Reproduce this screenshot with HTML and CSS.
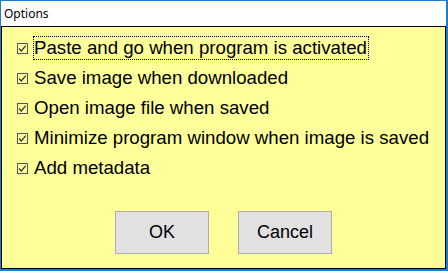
FILE: index.html
```html
<!DOCTYPE html>
<html>
<head>
<meta charset="utf-8">
<link rel="stylesheet" href="styles.css">
</head>
<body>
<div class="window">
  <div class="titlebar">Options</div>
  <div class="content">
    <div class="options">
      <div class="row"><svg class="cb" width="11" height="11" viewBox="0 0 11 11"><rect x="0.5" y="0.5" width="10" height="10" fill="none" stroke="#555"/><polyline points="2,5.5 4.3,8 8.8,2.6" fill="none" stroke="#333" stroke-width="1.2"/></svg><span class="label focus">Paste and go when program is activated</span></div>
      <div class="row"><svg class="cb" width="11" height="11" viewBox="0 0 11 11"><rect x="0.5" y="0.5" width="10" height="10" fill="none" stroke="#555"/><polyline points="2,5.5 4.3,8 8.8,2.6" fill="none" stroke="#333" stroke-width="1.2"/></svg><span class="label">Save image when downloaded</span></div>
      <div class="row"><svg class="cb" width="11" height="11" viewBox="0 0 11 11"><rect x="0.5" y="0.5" width="10" height="10" fill="none" stroke="#555"/><polyline points="2,5.5 4.3,8 8.8,2.6" fill="none" stroke="#333" stroke-width="1.2"/></svg><span class="label">Open image file when saved</span></div>
      <div class="row"><svg class="cb" width="11" height="11" viewBox="0 0 11 11"><rect x="0.5" y="0.5" width="10" height="10" fill="none" stroke="#555"/><polyline points="2,5.5 4.3,8 8.8,2.6" fill="none" stroke="#333" stroke-width="1.2"/></svg><span class="label">Minimize program window when image is saved</span></div>
      <div class="row"><svg class="cb" width="11" height="11" viewBox="0 0 11 11"><rect x="0.5" y="0.5" width="10" height="10" fill="none" stroke="#555"/><polyline points="2,5.5 4.3,8 8.8,2.6" fill="none" stroke="#333" stroke-width="1.2"/></svg><span class="label">Add metadata</span></div>
    </div>
    <div class="buttons">
      <div class="btn">OK</div>
      <div class="btn">Cancel</div>
    </div>
  </div>
</div>
</body>
</html>
```
FILE: styles.css
```css
html, body {
  margin: 0;
  padding: 0;
}
body {
  width: 448px;
  height: 271px;
  overflow: hidden;
  background: #ffffff;
}
.window {
  box-sizing: border-box;
  width: 448px;
  height: 271px;
  border-style: solid;
  border-color: #1a7fd4;
  border-width: 1px 2px 2px 1px;
  display: flex;
  flex-direction: column;
}
.titlebar {
  height: 25px;
  background: #ffffff;
  font-family: "Noto Sans", "Open Sans", sans-serif;
  font-size: 12px;
  line-height: 25px;
  color: #000;
  padding-left: 3px;
}
.content {
  flex: 1;
  background: #ffff99;
  border: 1px solid #000;
  padding: 9px 0 0 15px;
  display: flex;
  flex-direction: column;
}
.options {
  display: flex;
  flex-direction: column;
  gap: 6px;
}
.row {
  height: 24px;
  display: flex;
  align-items: center;
}
.cb {
  display: block;
  flex: none;
  margin-right: 5px;
}
.label {
  font-family: "Liberation Sans", Arial, sans-serif;
  font-size: 18.67px;
  line-height: 22px;
  color: #000;
  border: 1px dotted transparent;
  padding: 0 1px 0 0;
}
.label.focus {
  border-color: #000;
}
.buttons {
  display: flex;
  justify-content: center;
  gap: 29px;
  margin-top: 31px;
  margin-left: -15px;
}
.btn {
  box-sizing: border-box;
  width: 94px;
  height: 43px;
  background: #e1e1e1;
  border: 1px solid #adadad;
  font-family: "Liberation Sans", Arial, sans-serif;
  font-size: 18px;
  color: #000;
  display: flex;
  align-items: center;
  justify-content: center;
}
```
